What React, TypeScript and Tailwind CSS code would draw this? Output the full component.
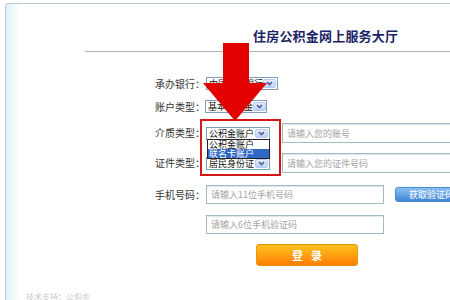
const cjk = { fontFamily: '"Noto Sans CJK SC", "Liberation Sans", sans-serif' }

function Select({ text, w }: { text: string; w: string }) {
  return (
    <div className={`flex h-[13px] shrink-0 items-center border border-[#7f9db9] bg-white ${w}`}>
      <span className="whitespace-nowrap pl-[2px] text-[9px] leading-none text-[#111]">{text}</span>
      <div className="ml-auto mr-px flex h-[9px] w-[13px] shrink-0 items-center justify-center rounded-[2px] border border-[#b7c9ee] bg-gradient-to-b from-[#e6eefe] to-[#bcd0f6]">
        <svg width="7" height="5" viewBox="0 0 7 5">
          <path d="M1 1 L3.5 3.6 L6 1" stroke="#4a5f8c" strokeWidth="1.6" fill="none" />
        </svg>
      </div>
    </div>
  )
}

function Field({ text, w }: { text: string; w: string }) {
  return (
    <div className={`flex h-full shrink-0 items-center border border-[#a3bac5] bg-white pl-[4px] shadow-[inset_0_1px_1px_#dce7ec] ${w}`}>
      <span className="whitespace-nowrap text-[9px] leading-none text-[#a3a3a3]">{text}</span>
    </div>
  )
}

export default function App() {
  return (
    <div className="relative h-[300px] w-[450px] overflow-hidden bg-white" style={cjk}>
      <div className="ml-[5px] mt-[3px] h-[320px] w-[470px] rounded-tl-[3px] border border-[#b8ccd5] bg-gradient-to-r from-[#dff1f8] via-white via-[3%] to-white">
        {/* Title */}
        <div className="pl-[247px] pt-[24px]">
          <h1 className="whitespace-nowrap text-[13px] font-bold leading-[16px] tracking-[0.2px] text-[#1b2466]">住房公积金网上服务大厅</h1>
        </div>
        <div className="ml-[79px] mt-[7px] h-px bg-[#a8b4ba]" />

        {/* Form */}
        <div className="flex flex-col whitespace-nowrap pl-[149px] text-[10px] text-[#333]">
          <div className="mt-[25px] flex h-[13px] items-center">
            <span className="w-[51px] shrink-0 leading-none">承办银行：</span>
            <Select text="中国建设银行" w="w-[72px]" />
          </div>
          <div className="mt-[10px] flex h-[13px] items-center">
            <span className="w-[50px] shrink-0 leading-none">账户类型：</span>
            <Select text="基本公积金" w="w-[62px]" />
          </div>
          <div className="mt-[10px] flex h-[20px] items-center">
            <span className="w-[51px] shrink-0 leading-none">介质类型：</span>
            <Select text="公积金账户" w="w-[64px]" />
            <div className="ml-[12px] h-full">
              <Field text="请输入您的账号" w="w-[180px]" />
            </div>
          </div>
          <div className="mt-[10px] flex h-[20px] items-center">
            <span className="w-[51px] shrink-0 leading-none">证件类型：</span>
            <Select text="居民身份证" w="w-[64px]" />
            <div className="ml-[12px] h-full">
              <Field text="请输入您的证件号码" w="w-[180px]" />
            </div>
          </div>
          <div className="mt-[12px] flex h-[19px] items-center">
            <span className="w-[51px] shrink-0 leading-none">手机号码：</span>
            <div className="h-full">
              <Field text="请输入11位手机号码" w="w-[178px]" />
            </div>
            <button className="ml-[11px] flex h-[15px] w-[66px] shrink-0 items-center justify-start rounded-[3px] border border-[#4a8ad0] bg-gradient-to-b from-[#8cc0f2] to-[#3f86d6] pl-[13px] text-[9px] leading-none text-white">
              获取验证码
            </button>
          </div>
          <div className="mt-[11px] flex h-[19px] items-center">
            <span className="w-[51px] shrink-0" />
            <div className="h-full">
              <Field text="请输入6位手机验证码" w="w-[178px]" />
            </div>
          </div>
          <button className="ml-[101px] mt-[10px] flex h-[22px] w-[102px] items-center justify-center rounded-[3px] border border-[#e9940f] bg-gradient-to-b from-[#ffc21c] to-[#ff7d05] pl-[8px] text-[11px] font-bold leading-none tracking-[8px] text-white">
            登录
          </button>
        </div>
        <p className="ml-[20px] mt-[27px] whitespace-nowrap text-[8px] leading-none text-[#c8c8c8]">技术支持：公积金</p>
      </div>

      {/* Open dropdown list */}
      <div className="absolute left-[207px] top-[139px] flex w-[63px] flex-col whitespace-nowrap border border-[#222] bg-white text-[9px] leading-[9px]">
        <span className="h-[9px] pl-[1px] text-[#111]">公积金账户</span>
        <span className="h-[9px] bg-[#3168c4] pl-[1px] text-white">联名卡账户</span>
      </div>

      {/* Red highlight box */}
      <div className="absolute left-[200px] top-[119px] h-[57px] w-[81px] border-2 border-[#d41818]" />

      {/* Red arrow */}
      <svg className="absolute left-0 top-0" width="450" height="300" viewBox="0 0 450 300">
        <path d="M223 43 H249 V83 H267 L235 121 L203 83 H223 Z" fill="#e30000" />
      </svg>
    </div>
  )
}
